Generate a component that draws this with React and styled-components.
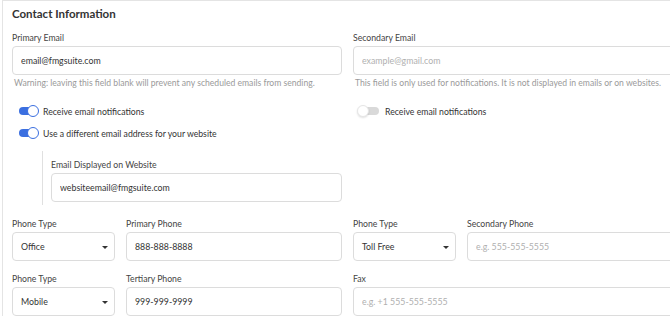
import React from "react";
import styled, { createGlobalStyle } from "styled-components";

const GlobalStyle = createGlobalStyle`
  html, body {
    margin: 0;
    background: #fff;
    overflow: hidden;
  }
  body {
    font-family: Lato, "Open Sans", sans-serif;
    color: #333;
  }
`;

const Card = styled.div`
  margin-left: 2px;
  border-top: 1px solid #e4e4e4;
  border-left: 1px solid #e4e4e4;
  padding: 5px 0 0 9px;
  width: 700px;
`;

const Title = styled.h2`
  margin: 0 0 11px;
  font-size: 11.5px;
  font-weight: 700;
  color: #333;
  line-height: 15px;
`;

const Columns = styled.div`
  display: grid;
  grid-template-columns: 330px 330px;
  column-gap: 11px;
  align-items: start;
`;

const Column = styled.div`
  display: flex;
  flex-direction: column;
`;

const Label = styled.label`
  display: block;
  font-size: 8.7px;
  line-height: 11px;
  color: #444;
  margin-bottom: 3px;
`;

const Input = styled.input`
  box-sizing: border-box;
  width: 100%;
  height: 29px;
  border: 1px solid #dcdcdc;
  border-radius: 4px;
  padding: 0 8px;
  font-family: inherit;
  font-size: 8.8px;
  color: #333;
  outline: none;
  &::placeholder {
    color: #b0b0b0;
  }
`;

const Hint = styled.p`
  margin: 3px 0 0 2px;
  font-size: 8.6px;
  line-height: 11px;
  color: #9a9a9a;
  white-space: nowrap;
`;

const ToggleList = styled.div`
  display: flex;
  flex-direction: column;
  gap: 10px;
  margin: 16px 0 0 7px;
`;

const ToggleRow = styled.div`
  display: flex;
  align-items: center;
  gap: 6px;
  font-size: 8.7px;
  color: #333;
  height: 12px;
`;

const Track = styled.span`
  position: relative;
  width: ${(p) => (p.$on ? "18px" : "16px")};
  height: 8px;
  border-radius: 4px;
  margin-left: ${(p) => (p.$on ? "0" : "3px")};
  background: ${(p) => (p.$on ? "#3b6fe0" : "#d9d9d9")};
  flex-shrink: 0;
`;

const Knob = styled.span`
  position: absolute;
  top: -2px;
  left: ${(p) => (p.$on ? "8px" : "-6px")};
  width: 12px;
  height: 12px;
  box-sizing: border-box;
  border-radius: 50%;
  background: #fff;
  border: 1px solid ${(p) => (p.$on ? "#3b6fe0" : "#e6e6e6")};
  box-shadow: ${(p) => (p.$on ? "none" : "0 1px 2px rgba(0,0,0,0.12)")};
`;

const Nested = styled.div`
  margin: 12px 0 0 30px;
  border-left: 1px solid #e0e0e0;
  padding: 8px 0 3px 8px;
`;

const PhoneRow = styled.div`
  display: grid;
  grid-template-columns: ${(p) => (p.$single ? "1fr" : "103px 1fr")};
  column-gap: 11px;
  margin-top: ${(p) => p.$top}px;
`;

const SelectBox = styled.div`
  box-sizing: border-box;
  height: 29px;
  border: 1px solid #dcdcdc;
  border-radius: 4px;
  padding: 0 6px 0 8px;
  display: flex;
  align-items: center;
  justify-content: space-between;
  font-size: 8.8px;
  color: #333;
`;

const Caret = styled.span`
  width: 0;
  height: 0;
  border-left: 3px solid transparent;
  border-right: 3px solid transparent;
  border-top: 3px solid #333;
  margin-top: 1px;
`;

const Toggle = ({ on, children }) => (
  <ToggleRow>
    <Track $on={on}>
      <Knob $on={on} />
    </Track>
    {children}
  </ToggleRow>
);

const Field = ({ label, value, placeholder }) => (
  <div>
    <Label>{label}</Label>
    <Input defaultValue={value} placeholder={placeholder} />
  </div>
);

const SelectField = ({ label, value }) => (
  <div>
    <Label>{label}</Label>
    <SelectBox>
      {value}
      <Caret />
    </SelectBox>
  </div>
);

export default function App() {
  return (
    <>
      <GlobalStyle />
      <Card>
        <Title>Contact Information</Title>
        <Columns>
          <Column>
            <Field label="Primary Email" value="email@fmgsuite.com" />
            <Hint>
              Warning: leaving this field blank will prevent any scheduled emails from sending.
            </Hint>
            <ToggleList>
              <Toggle on>Receive email notifications</Toggle>
              <Toggle on>Use a different email address for your website</Toggle>
            </ToggleList>
            <Nested>
              <Field label="Email Displayed on Website" value="websiteemail@fmgsuite.com" />
            </Nested>
          </Column>
          <Column>
            <Field label="Secondary Email" placeholder="example@gmail.com" />
            <Hint>
              This field is only used for notifications. It is not displayed in emails or on websites.
            </Hint>
            <ToggleList>
              <Toggle>Receive email notifications</Toggle>
            </ToggleList>
          </Column>
        </Columns>
        <Columns>
          <PhoneRow $top={13}>
            <SelectField label="Phone Type" value="Office" />
            <Field label="Primary Phone" value="888-888-8888" />
          </PhoneRow>
          <PhoneRow $top={13}>
            <SelectField label="Phone Type" value="Toll Free" />
            <Field label="Secondary Phone" placeholder="e.g. 555-555-5555" />
          </PhoneRow>
          <PhoneRow $top={12}>
            <SelectField label="Phone Type" value="Mobile" />
            <Field label="Tertiary Phone" value="999-999-9999" />
          </PhoneRow>
          <PhoneRow $top={12} $single>
            <Field label="Fax" placeholder="e.g. +1 555-555-5555" />
          </PhoneRow>
        </Columns>
      </Card>
    </>
  );
}
